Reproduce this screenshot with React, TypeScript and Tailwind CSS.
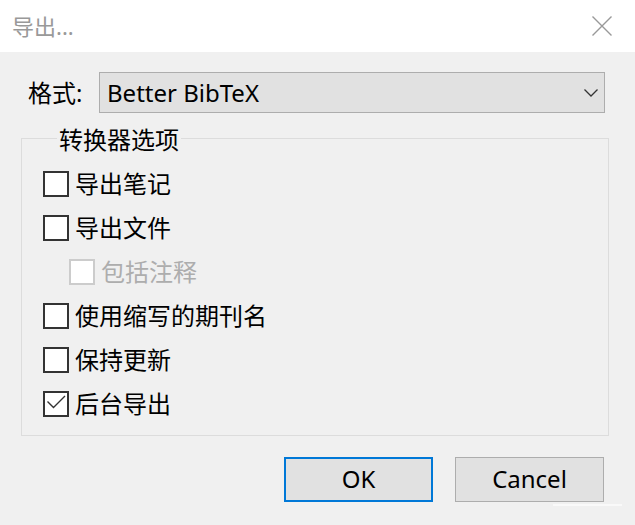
import React from "react";

const FONT = '"Noto Sans", "Noto Sans CJK SC", sans-serif';

function Box({ checked, disabled }: { checked?: boolean; disabled?: boolean }) {
  return (
    <div
      className={`relative w-[26px] h-[26px] shrink-0 bg-white border-2 ${
        disabled ? "border-[#cccccc]" : "border-[#333333]"
      }`}
    >
      {checked && (
        <svg className="absolute left-[-2px] top-[-2px]" width="26" height="26" viewBox="0 0 26 26">
          <polyline points="4.5,10.5 10.5,16.5 22,5" fill="none" stroke="#333" strokeWidth="1.4" />
        </svg>
      )}
    </div>
  );
}

function Row({ label, checked, disabled, indent }: { label: string; checked?: boolean; disabled?: boolean; indent?: boolean }) {
  return (
    <div className={`flex items-center h-[44px] gap-[6px] ${indent ? "pl-[26px]" : ""}`}>
      <Box checked={checked} disabled={disabled} />
      <span className={`text-[24px] leading-none ${disabled ? "text-[#adadad]" : "text-black"}`}>{label}</span>
    </div>
  );
}

export default function App() {
  return (
    <div className="w-[635px] h-[525px] bg-[#f0f0f0] overflow-hidden flex flex-col" style={{ fontFamily: FONT }}>
      <div className="h-[52px] bg-white flex items-center justify-between pl-[12px] pr-[23px] shrink-0">
        <span className="text-[22px] text-[#999999] leading-none">导出...</span>
        <svg width="20" height="20" viewBox="0 0 20 20">
          <path d="M0.5 0.5 L19.5 19.5 M19.5 0.5 L0.5 19.5" stroke="#999" strokeWidth="1.4" fill="none" />
        </svg>
      </div>

      <div className="flex items-center mt-[20px] pl-[28px] pr-[30px] h-[41px]">
        <span className="text-[24px] leading-none w-[71px] text-black">格式:</span>
        <div className="flex-1 h-[41px] bg-[#e1e1e1] border border-[#adadad] flex items-center justify-between pl-[7px] pr-[6px]">
          <span className="text-[24px] leading-none text-black pt-[1px]">Better BibTeX</span>
          <svg width="14" height="8" viewBox="0 0 14 8">
            <polyline points="0.5,0.5 7,7 13.5,0.5" fill="none" stroke="#333" strokeWidth="1.3" />
          </svg>
        </div>
      </div>

      <fieldset className="mt-[11px] ml-[21px] mr-[26px] border border-[#dcdcdc] pl-[21px] pt-[10px] pb-[9px]">
        <legend className="ml-[14px] px-[2px] pt-[4px] text-[24px] leading-[24px] text-black">转换器选项</legend>
        <Row label="导出笔记" />
        <Row label="导出文件" />
        <Row label="包括注释" disabled indent />
        <Row label="使用缩写的期刊名" />
        <Row label="保持更新" />
        <Row label="后台导出" checked />
      </fieldset>

      <div className="flex justify-end gap-[22px] mt-[21px] pr-[31px]">
        <div className="w-[149px] h-[45px] bg-[#e1e1e1] border-2 border-[#0078d7] flex items-center justify-center pb-[2px] text-[24px] leading-none text-black">
          OK
        </div>
        <div className="w-[149px] h-[45px] bg-[#e1e1e1] border border-[#adadad] flex items-center justify-center pb-[2px] text-[24px] leading-none text-black">
          Cancel
        </div>
      </div>
      <div className="mt-[2px] ml-[553px] w-[69px] h-[2px] bg-[#f9f9f9]" />
    </div>
  );
}
